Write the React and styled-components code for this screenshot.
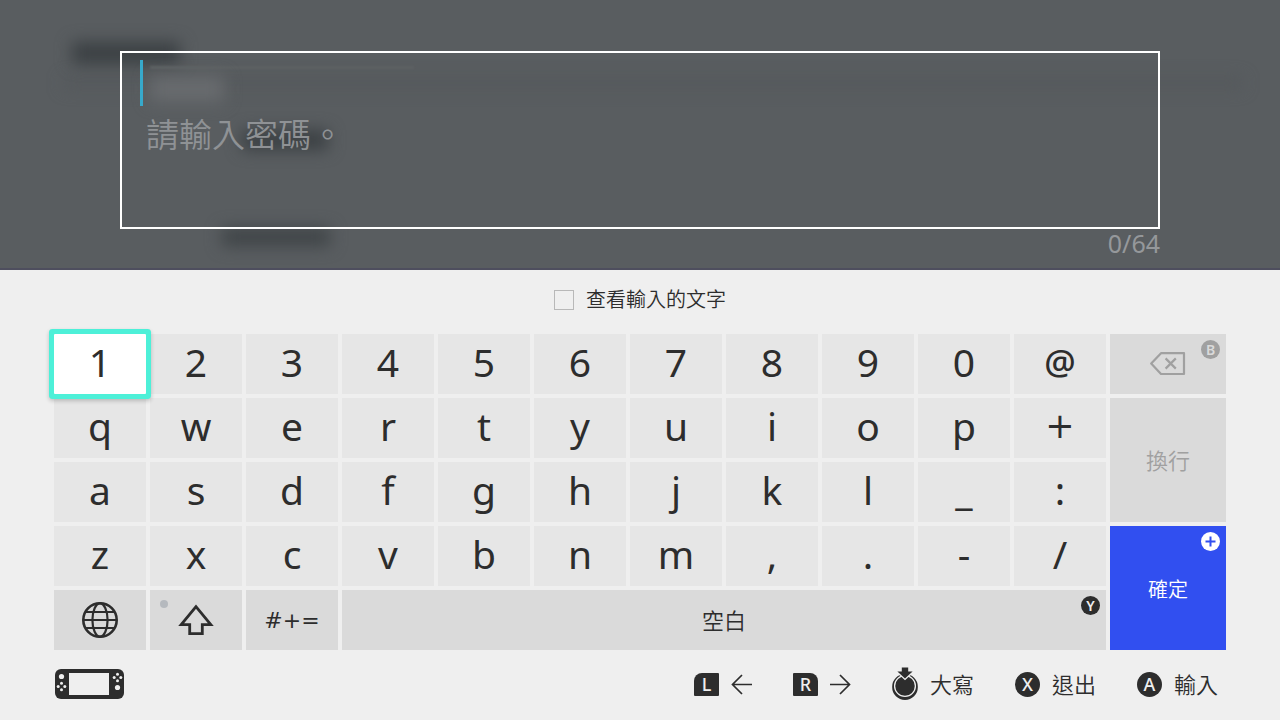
import React, { useState } from "react";
import styled, { createGlobalStyle } from "styled-components";

const MAX_LENGTH = 64;

const rows = [
  ["1", "2", "3", "4", "5", "6", "7", "8", "9", "0", "@"],
  ["q", "w", "e", "r", "t", "y", "u", "i", "o", "p", "+"],
  ["a", "s", "d", "f", "g", "h", "j", "k", "l", "_", ":"],
  ["z", "x", "c", "v", "b", "n", "m", ",", ".", "-", "/"],
];

const App = () => {
  const [text, setText] = useState("");
  const [selected, setSelected] = useState("1");
  const [visible, setVisible] = useState(false);

  const type = (char) => {
    setSelected(char);
    if (text.length < MAX_LENGTH) {
      setText(text + char);
    }
  };

  return (
    <Page>
      <GlobalStyle />
      <Backdrop>
        <Shade $left="5%" $top="78px" $width="92%" $height="10px" $color="#54585b" />
        <Shade $left="72px" $top="42px" $width="108px" $height="22px" $color="#3b4043" />
        <Shade $left="150px" $top="66px" $width="264px" $height="3px" $color="#5d6163" $blur="1px" />
        <Shade $left="150px" $top="76px" $width="74px" $height="26px" $color="#686b6e" />
        <Shade $left="242px" $top="130px" $width="86px" $height="20px" $color="#3b4043" />
        <Shade $left="222px" $top="228px" $width="108px" $height="18px" $color="#3f4447" />
        <Field>
          <Caret />
          <Input
            aria-label="請輸入密碼。"
            placeholder="請輸入密碼。"
            maxLength={MAX_LENGTH}
            value={text}
            $masked={!visible}
            onChange={(ev) => setText(ev.target.value)}
          />
        </Field>
        <Counter>
          {text.length}/{MAX_LENGTH}
        </Counter>
      </Backdrop>

      <Panel>
        <ShowText>
          <Checkbox
            type="checkbox"
            checked={visible}
            onChange={(ev) => setVisible(ev.target.checked)}
          />
          查看輸入的文字
        </ShowText>

        <Keyboard>
          <Letters>
            {rows.flat().map((char) => (
              <Key
                key={char}
                $selected={char === selected}
                $symbol={char === "+"}
                $small={char === "@" || char === "+"}
                onClick={() => type(char)}
              >
                {char}
              </Key>
            ))}
            <FunctionKey aria-label="語言">
              <GlobeIcon />
            </FunctionKey>
            <FunctionKey aria-label="大寫">
              <ShiftDot />
              <ShiftIcon />
            </FunctionKey>
            <SymbolsKey>#+=</SymbolsKey>
            <SpaceKey onClick={() => type(" ")}>
              空白
              <KeyHint>Y</KeyHint>
            </SpaceKey>
          </Letters>
          <Actions>
            <FunctionKey
              aria-label="刪除"
              $disabled
              onClick={() => setText(text.slice(0, -1))}
            >
              <BackspaceIcon />
              <KeyHint $background="#a0a0a0" $color="#dadada">
                B
              </KeyHint>
            </FunctionKey>
            <FunctionKey $disabled>換行</FunctionKey>
            <ConfirmKey>
              確定
              <KeyHint $background="#fff">
                <PlusIcon />
              </KeyHint>
            </ConfirmKey>
          </Actions>
        </Keyboard>

        <Footer>
          <ConsoleIcon />
          <Hints>
            <Hint aria-label="向左">
              <Shoulder $side="left">L</Shoulder>
              <ArrowIcon d="M21 11.5H1.5M11 2L1.5 11.5L11 21" />
            </Hint>
            <Hint aria-label="向右">
              <Shoulder $side="right">R</Shoulder>
              <ArrowIcon d="M0 11.5H19.5M10 2L19.5 11.5L10 21" />
            </Hint>
            <Hint>
              <StickIcon />
              大寫
            </Hint>
            <Hint>
              <Round>X</Round>
              退出
            </Hint>
            <Hint>
              <Round>A</Round>
              輸入
            </Hint>
          </Hints>
        </Footer>
      </Panel>
    </Page>
  );
};

const GlobeIcon = () => (
  <svg width="36" height="36" viewBox="0 0 36 36" fill="none" stroke="#2d2d2d" strokeWidth="2.2">
    <circle cx="18" cy="18" r="16.7" strokeWidth="2.6" />
    <ellipse cx="18" cy="18" rx="7.6" ry="16.7" />
    <path d="M1.5 18H34.5M4 10H32M4 26H32" />
  </svg>
);

const ShiftIcon = () => (
  <svg width="36" height="32" viewBox="0 0 36 32" fill="none" stroke="#2d2d2d" strokeWidth="2.8">
    <path d="M18 2.6L3.2 20.6H11.7V29.6H24.3V20.6H32.8Z" />
  </svg>
);

const BackspaceIcon = () => (
  <svg width="36" height="24" viewBox="0 0 36 24" fill="none" stroke="#a0a0a0" strokeWidth="2.2">
    <path d="M1.2 11.5L11 1.2H34V22H11Z" strokeLinejoin="round" />
    <path d="M15.6 6.4L25.8 16.6M25.8 6.4L15.6 16.6" />
  </svg>
);

const PlusIcon = () => (
  <svg width="11" height="11" viewBox="0 0 11 11" stroke="#314ff0" strokeWidth="2">
    <path d="M5.5 0.5V10.5M0.5 5.5H10.5" />
  </svg>
);

const ArrowIcon = ({ d }) => (
  <svg width="21" height="23" viewBox="0 0 21 23" fill="none" stroke="#2d2d2d" strokeWidth="1.7">
    <path d={d} />
  </svg>
);

const StickIcon = () => (
  <svg width="26" height="34" viewBox="0 0 26 34" fill="#2d2d2d">
    <path d="M13 7A12.8 12.4 0 0 0 0.2 19.5V20.5A12.8 12.5 0 0 0 25.8 20.5V19.5A12.8 12.4 0 0 0 13 7Z" />
    <circle cx="13" cy="19" r="10.4" fill="none" stroke="#efefef" strokeWidth="1.3" />
    <path
      d="M9.8 0.5H16.2V4.5H20.6L13 11.5L5.4 4.5H9.8Z"
      stroke="#efefef"
      strokeWidth="2.4"
      paintOrder="stroke"
    />
  </svg>
);

const ConsoleIcon = () => (
  <svg width="70" height="30" viewBox="0 0 70 30">
    <rect width="69" height="30" rx="6" fill="#2d2d2d" />
    <g fill="#efefef">
      <rect x="14" y="4" width="40" height="22" />
      <circle cx="6.5" cy="7.5" r="2.6" />
      <circle cx="62.5" cy="18.5" r="2.6" />
      <circle cx="6.5" cy="14.2" r="1.5" />
      <circle cx="6.5" cy="20.8" r="1.5" />
      <circle cx="3.2" cy="17.5" r="1.5" />
      <circle cx="9.8" cy="17.5" r="1.5" />
      <circle cx="62.5" cy="5.2" r="1.5" />
      <circle cx="62.5" cy="11.8" r="1.5" />
      <circle cx="59.2" cy="8.5" r="1.5" />
      <circle cx="65.8" cy="8.5" r="1.5" />
    </g>
  </svg>
);

const GlobalStyle = createGlobalStyle`
  * {
    box-sizing: border-box;
  }
  body {
    margin: 0;
    color: #2d2d2d;
    background: #efefef;
    font-family: "Noto Sans", "Noto Sans CJK TC", sans-serif;
  }
  button, textarea {
    margin: 0;
    padding: 0;
    border: none;
    border-radius: 0;
    outline: none;
    color: inherit;
    background: transparent;
    font: inherit;
  }
  button {
    cursor: pointer;
  }
`;

const Page = styled.div`
  display: flex;
  flex-direction: column;
  min-height: 100vh;
`;

const Backdrop = styled.div`
  position: relative;
  overflow: hidden;
  padding: 51px 120px 10px;
  border-bottom: 2px solid #4e4e5e;
  background: #595d60;
`;

/* blurred remains of the page behind the keyboard */
const Shade = styled.div`
  position: absolute;
  left: ${(p) => p.$left};
  top: ${(p) => p.$top};
  width: ${(p) => p.$width};
  height: ${(p) => p.$height};
  background: ${(p) => p.$color};
  filter: blur(${(p) => p.$blur || "8px"});
`;

const Field = styled.div`
  position: relative;
  display: flex;
  flex-direction: column;
  gap: 5px;
  height: 178px;
  padding: 7px 18px;
  border: 2px solid #fff;
`;

const Caret = styled.div`
  width: 3px;
  height: 46px;
  background: #37a9cb;
`;

const Input = styled.textarea`
  flex: 1;
  padding-left: 6px;
  resize: none;
  color: #fff;
  font-size: 33px;
  font-weight: 350;
  line-height: 48px;
  -webkit-text-security: ${(p) => (p.$masked ? "disc" : "none")};

  &::placeholder {
    color: #8f9295;
  }
`;

const Counter = styled.div`
  position: relative;
  text-align: right;
  color: #95989b;
  font-size: 25px;
  font-weight: 400;
  line-height: 29px;
`;

const Panel = styled.div`
  flex: 1;
  display: flex;
  flex-direction: column;
  padding: 0 54px;
`;

const ShowText = styled.label`
  display: flex;
  align-items: center;
  justify-content: center;
  gap: 12px;
  height: 60px;
  font-size: 20px;
  font-weight: 350;
  line-height: 24px;
  cursor: pointer;
`;

const Checkbox = styled.input`
  appearance: none;
  width: 20px;
  height: 20px;
  margin: 0;
  border: 1px solid #b8b8b8;

  &:checked {
    background: #314ff0;
  }
`;

const Keyboard = styled.div`
  display: grid;
  grid-template-columns: 1fr 116px;
  gap: 4px;
  margin-top: 4px;
`;

const Letters = styled.div`
  display: grid;
  grid-template-columns: repeat(11, 1fr);
  grid-auto-rows: 60px;
  gap: 4px;
`;

const Actions = styled.div`
  display: grid;
  grid-template-rows: 60px 124px 124px;
  gap: 4px;
`;

const Key = styled.button`
  position: relative;
  z-index: ${(p) => (p.$selected ? 1 : 0)};
  padding-bottom: 4px;
  border-radius: ${(p) => (p.$selected ? "1px" : 0)};
  background: ${(p) => (p.$selected ? "#fff" : "#e6e6e6")};
  box-shadow: ${(p) =>
    p.$selected ? "0 0 0 5px #4df0d8, 0 2px 4px 5px rgba(0, 0, 0, 0.2)" : "none"};
  font-family: ${(p) => (p.$symbol ? '"DejaVu Sans"' : '"Noto Sans"')}, sans-serif;
  font-size: ${(p) => (p.$small ? "35px" : "39px")};
  font-weight: ${(p) => (p.$small && !p.$symbol ? 500 : 400)};
  line-height: 56px;
`;

const FunctionKey = styled.button`
  position: relative;
  display: flex;
  align-items: center;
  justify-content: center;
  color: ${(p) => (p.$disabled ? "#a0a0a0" : "#2d2d2d")};
  background: #dadada;
  font-size: 22px;
  font-weight: 350;
  line-height: 23px;
`;

const SymbolsKey = styled(FunctionKey)`
  font-family: "DejaVu Sans", sans-serif;
  font-weight: 400;
`;

const SpaceKey = styled(FunctionKey)`
  grid-column: span 8;
`;

const ConfirmKey = styled(FunctionKey)`
  color: #fff;
  background: #314ff0;
  font-size: 20px;
  line-height: normal;
`;

const KeyHint = styled.span`
  position: absolute;
  top: 6px;
  right: 6px;
  display: grid;
  place-items: center;
  width: 19px;
  height: 19px;
  border-radius: 50%;
  color: ${(p) => p.$color || "#efefef"};
  background: ${(p) => p.$background || "#2d2d2d"};
  font-family: "Noto Sans", sans-serif;
  font-size: 14px;
  font-weight: 600;
  line-height: 19px;
`;

const ShiftDot = styled.span`
  position: absolute;
  top: 10px;
  left: 10px;
  width: 8px;
  height: 8px;
  border-radius: 50%;
  background: #b5b9be;
`;

const Footer = styled.div`
  display: flex;
  align-items: center;
  justify-content: space-between;
  height: 68px;
  padding: 0 8px 0 1px;
`;

const Hints = styled.div`
  display: flex;
  gap: 41px;
`;

const Hint = styled.button`
  display: flex;
  align-items: center;
  gap: 12px;
  font-size: 22px;
  font-weight: 350;
  line-height: 23px;
`;

const Shoulder = styled.span`
  width: 25px;
  height: 23px;
  border-radius: ${(p) => (p.$side === "left" ? "8px 1px 1px 1px" : "1px 8px 1px 1px")};
  color: #efefef;
  background: #2d2d2d;
  font-family: "Noto Sans", sans-serif;
  font-size: 18px;
  font-weight: 500;
  line-height: 23px;
  text-align: center;
`;

const Round = styled.span`
  width: 25px;
  height: 25px;
  border-radius: 50%;
  color: #efefef;
  background: #2d2d2d;
  font-family: "Noto Sans", sans-serif;
  font-size: 18px;
  font-weight: 500;
  line-height: 25px;
  text-align: center;
`;

export default App;
